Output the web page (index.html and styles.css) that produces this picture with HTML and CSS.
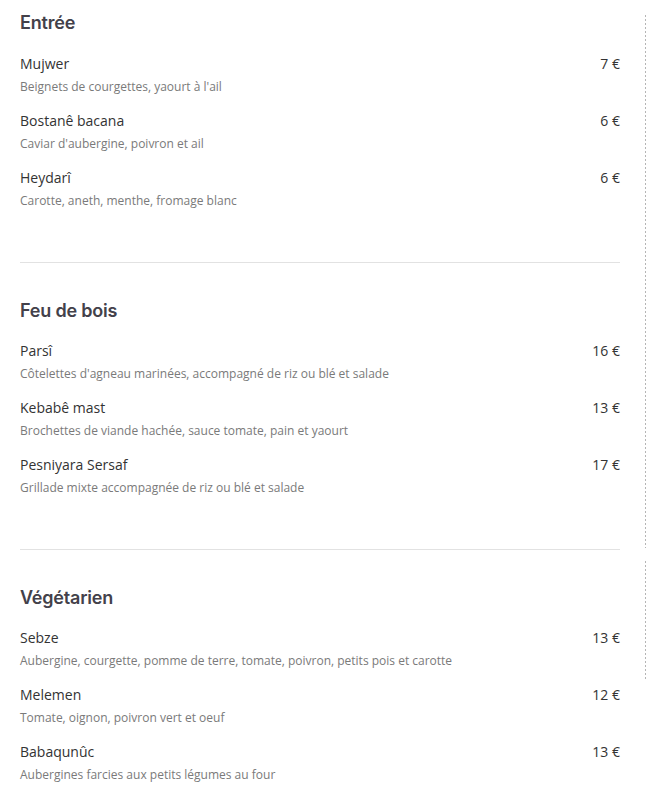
FILE: index.html
```html
<!DOCTYPE html>
<html lang="fr">
<head>
<meta charset="utf-8">
<link rel="stylesheet" href="styles.css">
</head>
<body>
<main class="menu">
  <section class="section first">
    <h2 class="title">Entrée</h2>
    <div class="item"><div class="row"><span class="name">Mujwer</span><span class="price">7 €</span></div><p class="desc">Beignets de courgettes, yaourt à l'ail</p></div>
    <div class="item"><div class="row"><span class="name">Bostanê bacana</span><span class="price">6 €</span></div><p class="desc">Caviar d'aubergine, poivron et ail</p></div>
    <div class="item"><div class="row"><span class="name">Heydarî</span><span class="price">6 €</span></div><p class="desc">Carotte, aneth, menthe, fromage blanc</p></div>
  </section>
  <section class="section">
    <h2 class="title">Feu de bois</h2>
    <div class="item"><div class="row"><span class="name">Parsî</span><span class="price">16 €</span></div><p class="desc">Côtelettes d'agneau marinées, accompagné de riz ou blé et salade</p></div>
    <div class="item"><div class="row"><span class="name">Kebabê mast</span><span class="price">13 €</span></div><p class="desc">Brochettes de viande hachée, sauce tomate, pain et yaourt</p></div>
    <div class="item"><div class="row"><span class="name">Pesniyara Sersaf</span><span class="price">17 €</span></div><p class="desc">Grillade mixte accompagnée de riz ou blé et salade</p></div>
  </section>
  <section class="section last">
    <h2 class="title">Végétarien</h2>
    <div class="item"><div class="row"><span class="name">Sebze</span><span class="price">13 €</span></div><p class="desc">Aubergine, courgette, pomme de terre, tomate, poivron, petits pois et carotte</p></div>
    <div class="item"><div class="row"><span class="name">Melemen</span><span class="price">12 €</span></div><p class="desc">Tomate, oignon, poivron vert et oeuf</p></div>
    <div class="item"><div class="row"><span class="name">Babaqunûc</span><span class="price">13 €</span></div><p class="desc">Aubergines farcies aux petits légumes au four</p></div>
  </section>
</main>
<div class="rule rule-a"></div>
<div class="rule rule-b"></div>
</body>
</html>
```
FILE: styles.css
```css
html, body {
  margin: 0;
  padding: 0;
  background: #fff;
}
body {
  font-family: "Open Sans", "Liberation Sans", sans-serif;
  color: #333;
  position: relative;
  width: 646px;
}
.menu {
  padding: 0 26px 0 20px;
}
.section {
  padding: 36px 0 52px;
  border-bottom: 1px solid #e2e2e2;
}
.section.first {
  padding-top: 11px;
}
.section.last {
  border-bottom: none;
}
.title {
  margin: 0 0 18px;
  font-family: "Inter", "Lato", sans-serif;
  font-weight: 600;
  font-size: 18px;
  line-height: 24px;
  color: #43414a;
  letter-spacing: -0.2px;
}
.first .title {
  margin-bottom: 19px;
}
.item {
  margin-bottom: 15px;
}
.item:last-child {
  margin-bottom: 0;
}
.row {
  display: flex;
  justify-content: space-between;
  font-size: 14px;
  line-height: 20px;
  color: #333;
}
.desc {
  margin: 4px 0 0;
  font-size: 12px;
  line-height: 18px;
  color: #7a7a7a;
}
.rule {
  position: absolute;
  left: 645px;
  width: 1px;
  background: repeating-linear-gradient(to bottom, #b5b5b5 0 2px, transparent 2px 4px);
}
.rule-a { top: 15px; height: 533px; }
.rule-b { top: 561px; height: 120px; }
```
